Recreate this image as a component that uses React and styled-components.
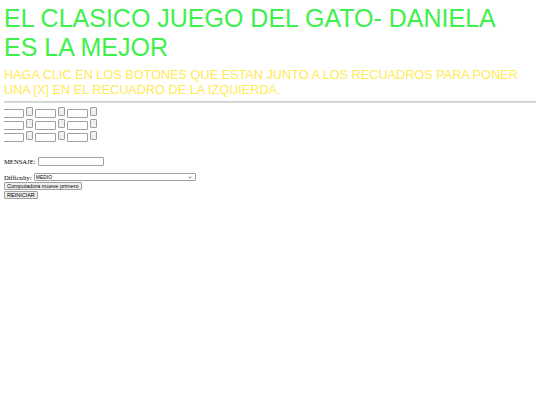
import React from "react";
import styled, { createGlobalStyle } from "styled-components";

const Global = createGlobalStyle`
  html, body { background: #fff; }
  body { margin: 4px; font-family: "Liberation Serif", serif; font-size: 6.6px; color: #000; }
`;

const Title = styled.h1`
  font-family: "Liberation Sans", Arial, sans-serif;
  font-weight: normal;
  font-size: 25px;
  line-height: 29px;
  color: #3ef04c;
  margin: 0;
  max-width: 520px;
`;

const Sub = styled.h3`
  font-family: "Liberation Sans", Arial, sans-serif;
  font-weight: normal;
  font-size: 12.7px;
  line-height: 14.5px;
  color: #ffea55;
  margin: 6px 0 0;
`;

const Rule = styled.hr`
  border: none;
  height: 2px;
  background: #dcdcdc;
  border-top: 1px solid #cfcfcf;
  box-sizing: border-box;
  margin: 4px 0 4px;
`;

const Board = styled.div`
  display: flex;
  flex-direction: column;
  gap: 1px;
  margin-left: -1px;
`;

const Row = styled.div`
  display: flex;
  align-items: flex-start;
  gap: 2px;
`;

const Cell = styled.div`
  display: flex;
  align-items: flex-start;
  gap: 2px;
`;

const Box = styled.input`
  width: 21px;
  height: 9px;
  margin: 2px 0 0;
  padding: 0;
  box-sizing: border-box;
  border: 1px solid #a0a0a0;
  border-radius: 1px;
  background: #fff;
`;

const Tiny = styled.button`
  width: 7px;
  height: 9px;
  margin: 0;
  padding: 0;
  box-sizing: border-box;
  border: 1px solid #a0a0a0;
  border-radius: 1px;
  background: #efefef;
`;

const Form = styled.div`
  margin-top: 15px;
  display: flex;
  flex-direction: column;
  align-items: flex-start;
`;

const Line = styled.div`
  display: flex;
  align-items: center;
  gap: 2px;
  margin-bottom: ${p => p.$mb || 0}px;
`;

const Label = styled.span`
  font-family: "Liberation Serif", serif;
  font-size: 6.6px;
`;

const Text = styled.input`
  width: 66px;
  height: 9px;
  margin: 0;
  padding: 0;
  box-sizing: border-box;
  border: 1px solid #a0a0a0;
  border-radius: 1px;
`;

const Select = styled.select`
  appearance: none;
  width: 162px;
  height: 8px;
  margin: 0;
  box-sizing: border-box;
  font-family: "Liberation Sans", sans-serif;
  font-size: 5px;
  line-height: 6px;
  padding: 0 1px;
  border: 1px solid #a0a0a0;
  border-radius: 1px;
  background: #fff url("data:image/svg+xml;utf8,<svg xmlns='http://www.w3.org/2000/svg' width='6' height='4' viewBox='0 0 6 4'><path d='M0.8 0.8 L3 3 L5.2 0.8' fill='none' stroke='%23333' stroke-width='1'/></svg>") no-repeat right 3px center / 4px 3px;
  color: #000;
`;

const Btn = styled.button`
  font-family: "Liberation Sans", sans-serif;
  font-size: 5.5px;
  height: 8px;
  line-height: 6px;
  padding: 0 2px;
  margin: 1px 0 0;
  border: 1px solid #a0a0a0;
  border-radius: 1px;
  background: #efefef;
  color: #000;
`;

export default function App() {
  const rows = [0, 1, 2];
  return (
    <>
      <Global />
      <Title>EL CLASICO JUEGO DEL GATO- DANIELA ES LA MEJOR</Title>
      <Sub>HAGA CLIC EN LOS BOTONES QUE ESTAN JUNTO A LOS RECUADROS PARA PONER UNA [X] EN EL RECUADRO DE LA IZQUIERDA.</Sub>
      <Rule />
      <Board>
        {rows.map(r => (
          <Row key={r}>
            {[0, 1, 2].map(c => (
              <Cell key={c}>
                <Box type="text" readOnly />
                <Tiny />
              </Cell>
            ))}
          </Row>
        ))}
      </Board>
      <Form>
        <Line $mb={7}>
          <Label>MENSAJE:</Label>
          <Text type="text" />
        </Line>
        <Line>
          <Label>Difficulty:</Label>
          <Select defaultValue="MEDIO">
            <option>FACIL</option>
            <option>MEDIO</option>
            <option>DIFICIL</option>
          </Select>
        </Line>
        <Btn>Computadora mueve primero</Btn>
        <Btn>REINICIAR</Btn>
      </Form>
    </>
  );
}
